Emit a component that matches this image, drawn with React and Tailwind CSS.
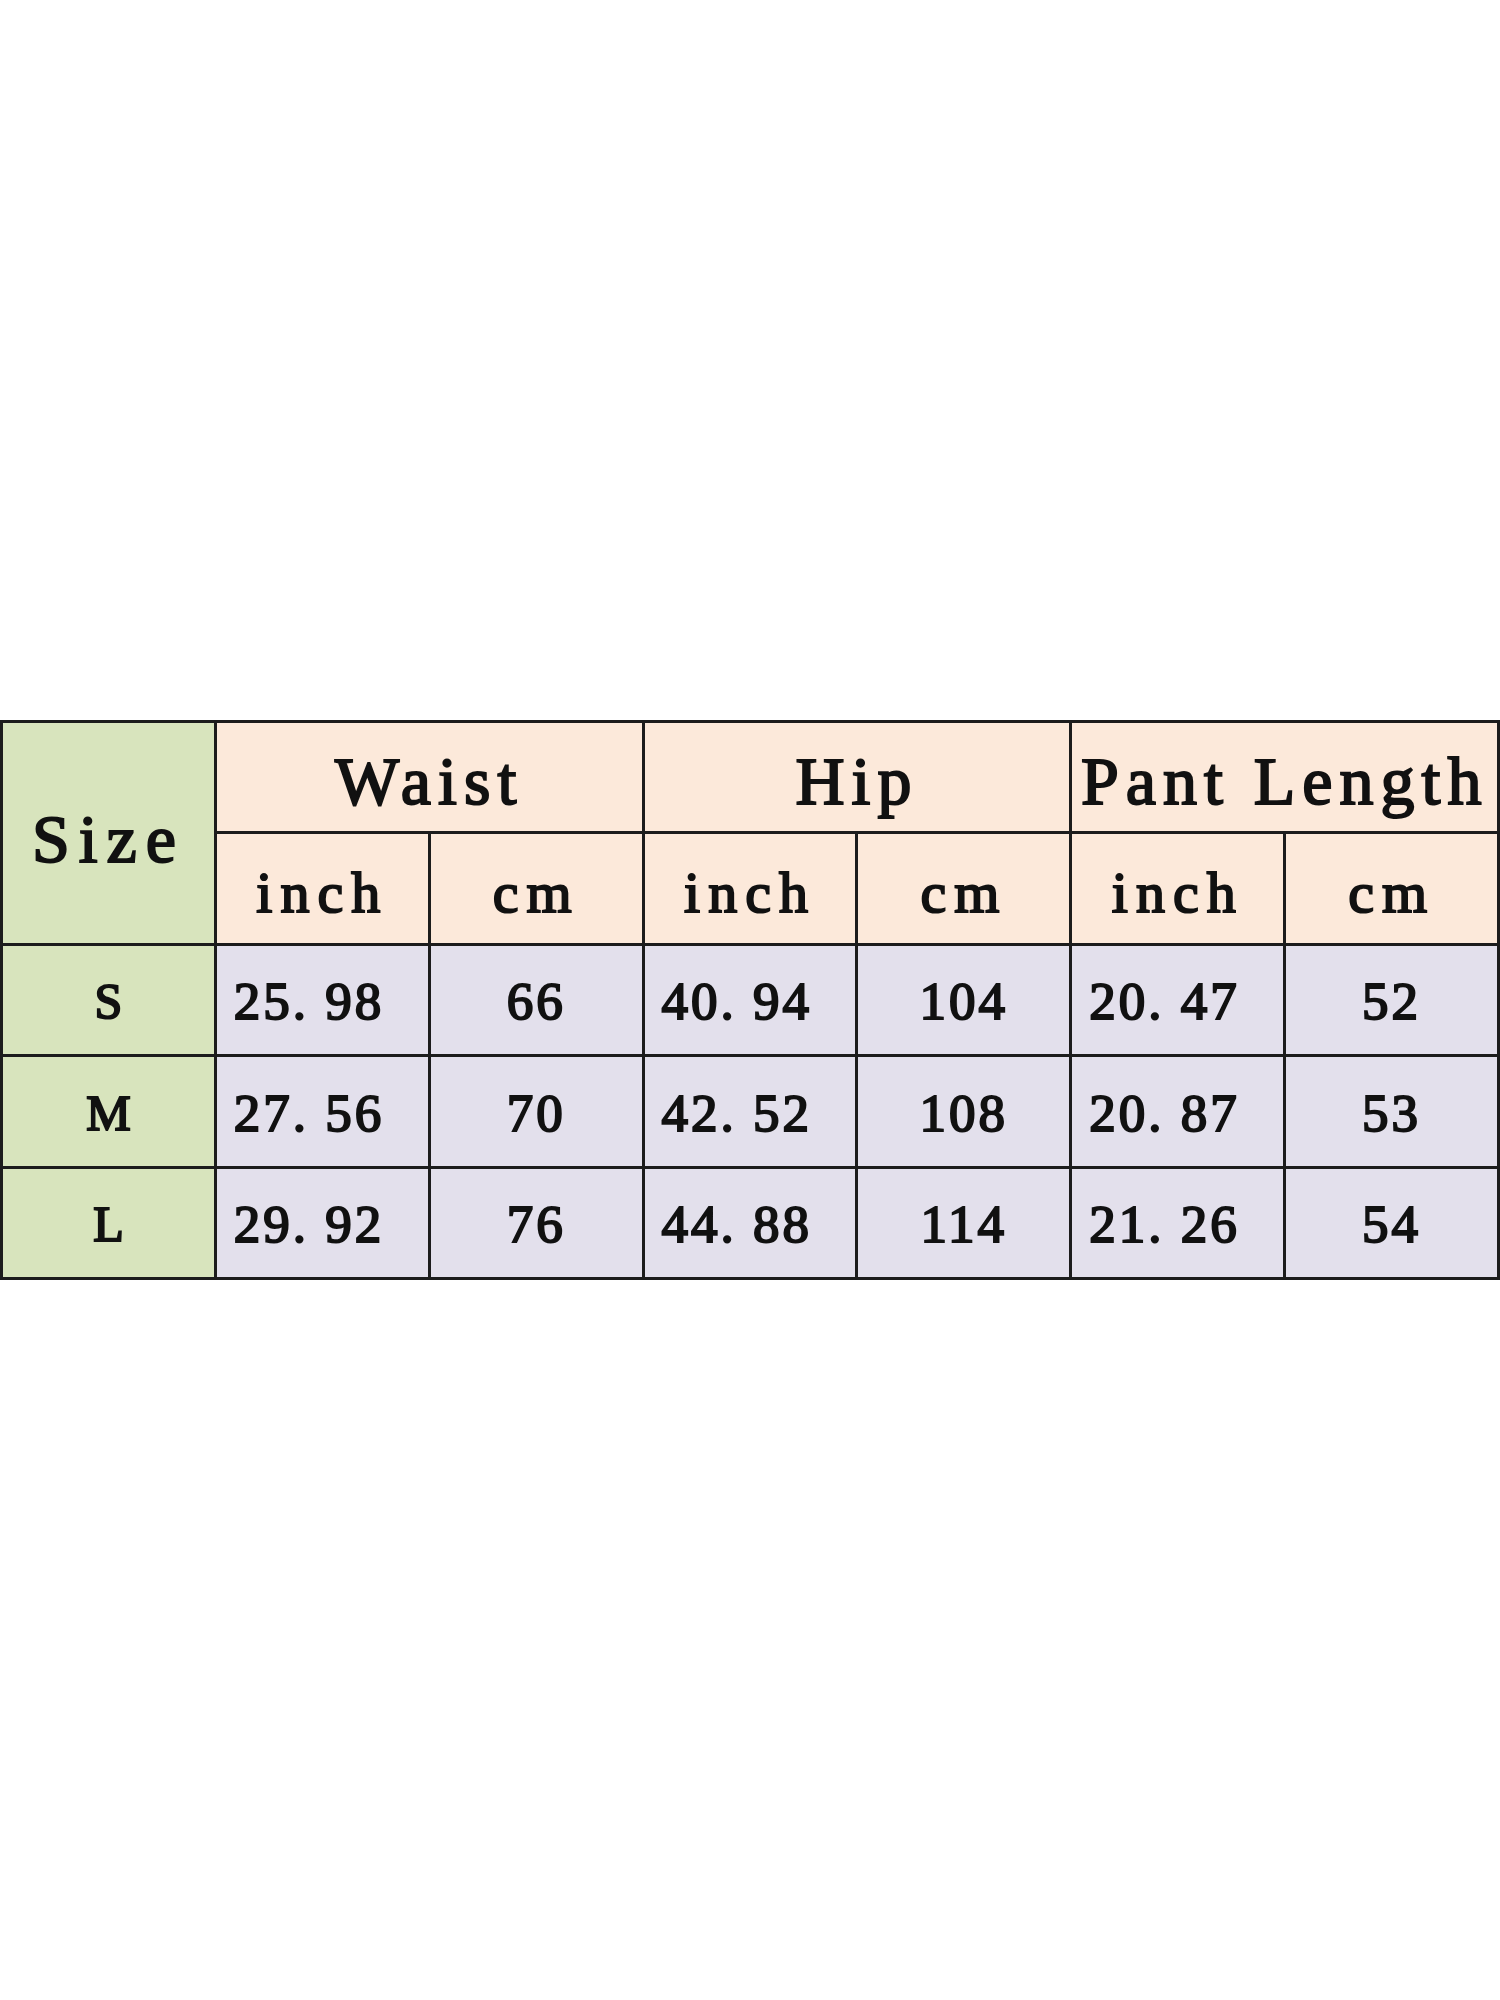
import React from "react";

const rows = [
  { size: "S", w: ["25. 98", "66"], h: ["40. 94", "104"], p: ["20. 47", "52"] },
  { size: "M", w: ["27. 56", "70"], h: ["42. 52", "108"], p: ["20. 87", "53"] },
  { size: "L", w: ["29. 92", "76"], h: ["44. 88", "114"], p: ["21. 26", "54"] },
];

const cell = "border-r-[3px] border-b-[3px] border-[#1c1c1c] flex items-center";
const head = cell + " bg-[#fce9da] justify-center";
const data = cell + " bg-[#e3e0ec]";

export default function App() {
  return (
    <div
      className="w-[1500px] h-[2000px] bg-white flex items-center"
      style={{ fontFamily: '"Liberation Serif", "Times New Roman", serif' }}
    >
      <div className="w-full h-[560px] grid grid-cols-7 grid-rows-5 border-l-[3px] border-t-[3px] border-[#1c1c1c] font-normal text-[#111] [-webkit-text-stroke:2px_#111]">
        <div className={cell + " row-span-2 bg-[#d8e4bd] justify-center text-[68px] tracking-[9px] pt-3"}>Size</div>
        <div className={head + " col-span-2 text-[68px] tracking-[7px] pt-2"}>Waist</div>
        <div className={head + " col-span-2 text-[68px] tracking-[7px] pt-2"}>Hip</div>
        <div className={head + " col-span-2 text-[68px] tracking-[7px] pt-2 whitespace-nowrap"}>Pant Length</div>
        {["inch", "cm", "inch", "cm", "inch", "cm"].map((u, i) => (
          <div key={i} className={head + " text-[58px] tracking-[8px] pt-2"}>{u}</div>
        ))}
        {rows.map((r) => (
          <React.Fragment key={r.size}>
            <div className={cell + " bg-[#d8e4bd] justify-center text-[50px] pt-1"}>{r.size}</div>
            {[r.w, r.h, r.p].map((pair, j) => (
              <React.Fragment key={j}>
                <div className={data + " pl-[17px] text-[53px] tracking-[3px] pt-1"}>{pair[0]}</div>
                <div className={data + " justify-center text-[53px] tracking-[3px] pt-1"}>{pair[1]}</div>
              </React.Fragment>
            ))}
          </React.Fragment>
        ))}
      </div>
    </div>
  );
}
